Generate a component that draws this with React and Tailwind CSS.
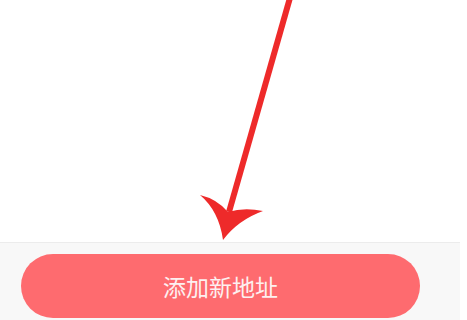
export default function App() {
  return (
    <div className="relative w-[467px] h-[320px] bg-white overflow-hidden" style={{ fontFamily: '"Noto Sans CJK SC", "Noto Sans", sans-serif' }}>
      <div className="h-[242px]" />
      <div className="w-[460px] h-[78px] bg-[#f8f8f8] border-t border-[#ececec] pt-[11px] pl-[21px]">
        <button className="w-[399px] h-[64px] rounded-full bg-[#fe6b6f] text-[#fdf0f0] text-[23px] flex items-center justify-center">
          添加新地址
        </button>
      </div>
      <svg className="absolute left-0 top-0" width="467" height="320" viewBox="0 0 467 320">
        <line x1="290.5" y1="-4" x2="229" y2="212" stroke="#ee2a2a" strokeWidth="6" />
        <path d="M200 195 Q217 199 228 212 Q244 207 263 211 Q238 220 223 240 Q219 211 200 195 Z" fill="#ee2a2a" />
      </svg>
    </div>
  );
}
